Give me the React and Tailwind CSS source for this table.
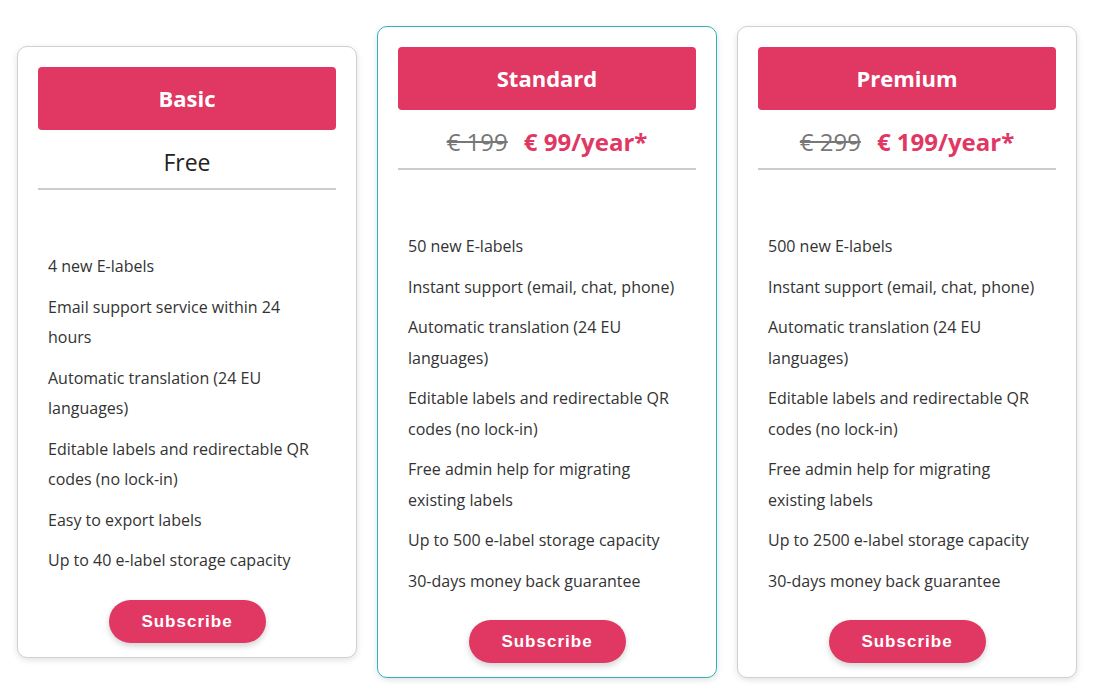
import React from "react";

const plans = [
  {
    name: "Basic",
    free: true,
    features: [
      "4 new E-labels",
      "Email support service within 24 hours",
      "Automatic translation (24 EU languages)",
      "Editable labels and redirectable QR codes (no lock-in)",
      "Easy to export labels",
      "Up to 40 e-label storage capacity",
    ],
  },
  {
    name: "Standard",
    oldPrice: "€ 199",
    price: "€ 99/year*",
    active: true,
    features: [
      "50 new E-labels",
      "Instant support (email, chat, phone)",
      "Automatic translation (24 EU languages)",
      "Editable labels and redirectable QR codes (no lock-in)",
      "Free admin help for migrating existing labels",
      "Up to 500 e-label storage capacity",
      "30-days money back guarantee",
    ],
  },
  {
    name: "Premium",
    oldPrice: "€ 299",
    price: "€ 199/year*",
    features: [
      "500 new E-labels",
      "Instant support (email, chat, phone)",
      "Automatic translation (24 EU languages)",
      "Editable labels and redirectable QR codes (no lock-in)",
      "Free admin help for migrating existing labels",
      "Up to 2500 e-label storage capacity",
      "30-days money back guarantee",
    ],
  },
];

function PlanCard({ plan }) {
  return (
    <div
      className={
        "w-[340px] bg-white rounded-[10px] border px-5 pt-5 pb-[14px] flex flex-col shadow-[0_2px_6px_rgba(0,0,0,0.12)] " +
        (plan.active ? "border-[#2ab5bb]" : "border-[#d0d0d0]")
      }
    >
      {/* header */}
      <div className="h-[63px] bg-[#e03763] rounded-[4px] flex items-center justify-center">
        <h2 className="text-white text-[22px] font-bold">{plan.name}</h2>
      </div>

      {/* price */}
      <div className="h-[60px] flex items-center justify-center border-b-2 border-[#cccccc] pt-[6px]">
        {plan.free ? (
          <span className="text-[23px] text-[#222]">Free</span>
        ) : (
          <span className="text-[24px]">
            <span className="text-[#777] line-through">{plan.oldPrice}</span>
            <span className="text-[#e03763] font-bold ml-4">{plan.price}</span>
          </span>
        )}
      </div>

      {/* features */}
      <ul className="mt-[61px] pl-[10px] pr-[12px] text-[16px] text-[#333] leading-[30.5px]">
        {plan.features.map((f) => (
          <li key={f} className="mb-[10px]">
            {f}
          </li>
        ))}
      </ul>

      <div className="flex justify-center mt-[14px]">
        <button className="w-[157px] h-[43px] rounded-full bg-[#e03763] text-white font-bold text-[17px] tracking-[1px] shadow-[0_3px_6px_rgba(0,0,0,0.18)] [font-family:'Liberation_Sans',Arial,sans-serif]">
          Subscribe
        </button>
      </div>
    </div>
  );
}

export default function App() {
  return (
    <div className="min-h-[700px] bg-white pl-[17px] pt-[26px] [font-family:'Open_Sans',sans-serif]">
      <div className="flex items-center gap-5">
        {plans.map((p) => (
          <PlanCard key={p.name} plan={p} />
        ))}
      </div>
    </div>
  );
}
